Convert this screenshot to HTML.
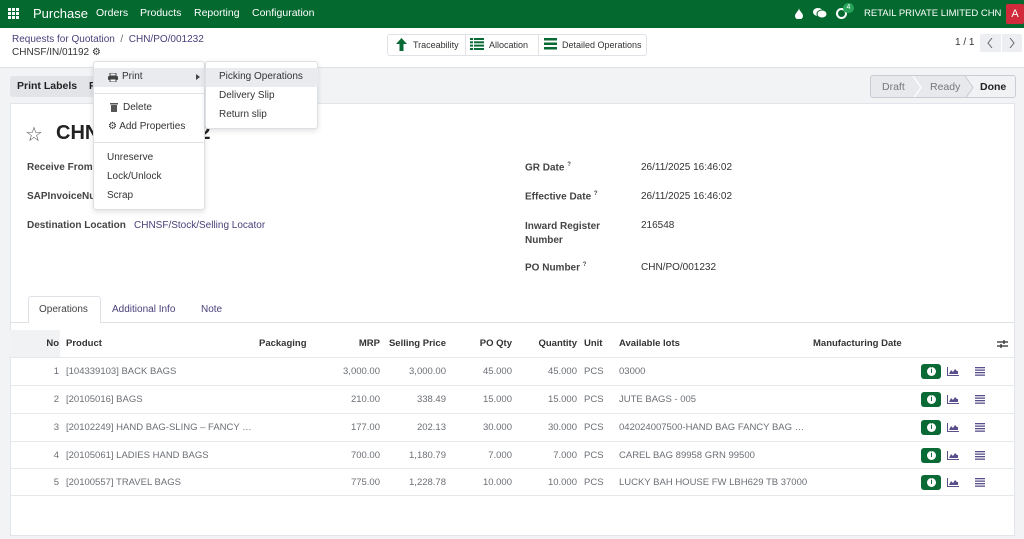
<!DOCTYPE html>
<html><head><meta charset="utf-8"><style>
*{box-sizing:border-box;margin:0;padding:0}
body{width:1024px;height:539px;overflow:hidden;font-family:"Liberation Sans",sans-serif;font-size:10px;color:#374151;background:#f1f3f5;position:relative}
.a{position:absolute;white-space:nowrap}
.nav{position:absolute;left:0;top:0;width:1024px;height:28px;background:#03692f;color:#fff}
.cp{position:absolute;left:0;top:28px;width:1024px;height:40px;background:#fff;border-bottom:1px solid #dee2e6}
.link{color:#4a3f7a}
.btn{position:absolute;background:#e2e4e8;border-radius:3px;height:21px;font-weight:bold;font-size:10.5px;line-height:21px;padding:0 7px;color:#222}
.sheet{position:absolute;left:10px;top:103px;width:1005px;height:433px;background:#fff;border:1px solid #e1e4e8}
.lbl{font-weight:bold;color:#444}
.menu{position:absolute;background:#fff;border:1px solid #dcdfe3;border-radius:3px;box-shadow:0 2px 6px rgba(0,0,0,.12)}
.mi{position:absolute;font-size:10px;color:#333}
.row{position:absolute;left:10px;width:1004px;height:28px;border-top:1px solid #e6e8eb;font-size:9.5px;color:#6b6f75}
.row span{position:absolute;top:8px}
.ib{position:absolute;left:911px;top:6px;width:20px;height:15px;background:#0a6a36;border-radius:3px;color:#0a6a36;font-weight:bold;font-size:8px;text-align:center;line-height:9px}
.ib b{position:absolute;left:6px;top:3px;width:9px;height:9px;border-radius:50%;background:#fff;font-size:7px;line-height:9px;text-align:center}
.ch{position:absolute;left:937px;top:9px}
.ls{position:absolute;left:965px;top:9px}
</style></head><body>
<div class="nav">
 <svg class="a" style="left:8px;top:8px" width="11" height="11"><g fill="#fff"><rect x="0" y="0" width="3" height="3"/><rect x="4" y="0" width="3" height="3"/><rect x="8" y="0" width="3" height="3"/><rect x="0" y="4" width="3" height="3"/><rect x="4" y="4" width="3" height="3"/><rect x="8" y="4" width="3" height="3"/><rect x="0" y="8" width="3" height="3"/><rect x="4" y="8" width="3" height="3"/><rect x="8" y="8" width="3" height="3"/></g></svg>
 <div class="a" style="left:33px;top:6px;font-size:13px">Purchase</div>
 <div class="a" style="left:96px;top:7px;font-size:10.5px">Orders</div>
 <div class="a" style="left:140px;top:7px;font-size:10.5px">Products</div>
 <div class="a" style="left:194px;top:7px;font-size:10.5px">Reporting</div>
 <div class="a" style="left:252px;top:7px;font-size:10.5px">Configuration</div>
 <svg class="a" style="left:795px;top:8px" width="8" height="11"><path d="M4 0 C4 3 0 5 0 8 A4 3.5 0 0 0 8 8 C8 5 4 3 4 0Z" fill="#fff"/></svg>
 <svg class="a" style="left:813px;top:7px" width="14" height="12"><ellipse cx="5" cy="5" rx="5" ry="4" fill="#fff"/><ellipse cx="9" cy="7" rx="5" ry="4" fill="#fff" stroke="#03692f"/></svg>
 <div class="a" style="left:836px;top:8px;width:11px;height:11px;border:2px solid #fff;border-radius:50%"></div>
 <div class="a" style="left:843px;top:3px;width:11px;height:10px;background:#27a35a;border-radius:5px;font-size:7px;text-align:center;line-height:10px">4</div>
 <div class="a" style="left:864px;top:8px;font-size:9.5px">RETAIL PRIVATE LIMITED CHN</div>
 <div class="a" style="left:1006px;top:4px;width:18px;height:20px;background:#d12a3a;border-radius:2px;text-align:center;line-height:20px;font-size:11px">A</div>
</div>
<div class="cp">
 <div class="a link" style="left:12px;top:6px;font-size:10px">Requests for Quotation &nbsp;<span style="color:#666">/</span>&nbsp; CHN/PO/001232</div>
 <div class="a" style="left:12px;top:19px;font-size:10px;color:#333">CHNSF/IN/01192 <span style="font-size:10px">⚙</span></div>
 <div class="a" style="left:387px;top:6px;width:260px;height:22px;border:1px solid #dfe2e6;border-radius:3px;background:#fff"></div>
 <div class="a" style="left:465px;top:7px;width:1px;height:20px;background:#e3e3e3"></div>
 <div class="a" style="left:538px;top:7px;width:1px;height:20px;background:#e3e3e3"></div>
 <svg class="a" style="left:396px;top:10px" width="11" height="13"><path d="M5.5 0 L11 6 H7.5 V13 H3.5 V6 H0Z" fill="#0a6a36"/></svg>
 <div class="a" style="left:413px;top:12px;font-size:9px;color:#333">Traceability</div>
 <svg class="a" style="left:470px;top:10px" width="14" height="12"><g fill="#0a6a36"><rect y="0" width="14" height="2"/><rect y="3.3" width="14" height="2"/><rect y="6.6" width="14" height="2"/><rect y="10" width="14" height="2"/><rect x="3" y="0" width="1" height="12" fill="#fff"/></g></svg>
 <div class="a" style="left:489px;top:12px;font-size:9px;color:#333">Allocation</div>
 <svg class="a" style="left:544px;top:10px" width="13" height="12"><g fill="#0a6a36"><rect y="0" width="13" height="2.5"/><rect y="4.5" width="13" height="2.5"/><rect y="9" width="13" height="2.5"/></g></svg>
 <div class="a" style="left:562px;top:12px;font-size:9px;color:#333">Detailed Operations</div>
 <div class="a" style="left:955px;top:9px;font-size:10px;color:#333">1 / 1</div>
 <div class="a" style="left:980px;top:6px;width:42px;height:18px;background:#eceef1;border-radius:2px"></div>
 <div class="a" style="left:1001px;top:6px;width:1px;height:18px;background:#fff"></div>
 <svg class="a" style="left:987px;top:10px" width="30" height="10"><polyline points="5,0 1,5 5,10" fill="none" stroke="#666"/><polyline points="23,0 27,5 23,10" fill="none" stroke="#666"/></svg>
</div>
<div class="btn" style="left:10px;top:76px">Print Labels</div>
<div class="btn" style="left:82px;top:76px;width:30px">R</div>
<div class="a" style="left:870px;top:75px;width:146px;height:23px;border:1px solid #c9ccd2;border-radius:3px;background:#e7e9ec;overflow:hidden">
 <div class="a" style="left:94px;top:0;width:52px;height:23px;background:#f1f2f4"></div>
 <svg class="a" style="left:0;top:0" width="146" height="23"><polyline points="42,0 50,11.5 42,23" fill="none" stroke="#fff" stroke-width="1.2"/><polyline points="94,0 102,11.5 94,23" fill="#e7e9ec" stroke="#c9ccd2"/></svg>
 <div class="a" style="left:11px;top:5px;font-size:10.5px;color:#777">Draft</div>
 <div class="a" style="left:59px;top:5px;font-size:10.5px;color:#777">Ready</div>
 <div class="a" style="left:109px;top:5px;font-size:10.5px;color:#222;font-weight:bold">Done</div>
</div>
<div class="sheet">
 <div class="a" style="left:14px;top:18px;font-size:20px;color:#555">☆</div>
 <div class="a" style="left:45px;top:18px;font-size:20px;font-weight:bold;color:#222">CHNSF/IN/01192</div>
 <div class="a lbl" style="left:16px;top:58px">Receive From</div>
 <div class="a lbl" style="left:16px;top:87px">SAPInvoiceNumber</div>
 <div class="a lbl" style="left:16px;top:116px">Destination Location</div>
 <div class="a link" style="left:123px;top:116px">CHNSF/Stock/Selling Locator</div>
 <div class="a lbl" style="left:514px;top:58px">GR Date <sup style="font-size:6px">?</sup></div>
 <div class="a lbl" style="left:514px;top:87px">Effective Date <sup style="font-size:6px">?</sup></div>
 <div class="a lbl" style="left:514px;top:116px;line-height:14px">Inward Register<br>Number</div>
 <div class="a lbl" style="left:514px;top:158px">PO Number <sup style="font-size:6px">?</sup></div>
 <div class="a" style="left:630px;top:58px;color:#333">26/11/2025 16:46:02</div>
 <div class="a" style="left:630px;top:87px;color:#333">26/11/2025 16:46:02</div>
 <div class="a" style="left:630px;top:116px;color:#333">216548</div>
 <div class="a" style="left:630px;top:158px;color:#333">CHN/PO/001232</div>
 <div class="a" style="left:0;top:218px;width:1003px;height:1px;background:#dee2e6"></div>
 <div class="a" style="left:17px;top:192px;width:73px;height:27px;background:#fff;border:1px solid #dee2e6;border-bottom:none;border-radius:3px 3px 0 0"></div>
 <div class="a" style="left:28px;top:200px;color:#444">Operations</div>
 <div class="a link" style="left:101px;top:200px">Additional Info</div>
 <div class="a link" style="left:190px;top:200px">Note</div>
</div>
<div class="a" style="left:10px;top:330px;width:50px;height:27px;background:#f1f2f4"></div>
<div class="a" style="left:10px;top:330px;width:1004px;height:27px;font-weight:bold;font-size:9.5px;color:#333">
 <span class="a" style="right:955px;top:8px">No</span>
 <span class="a" style="left:56px;top:8px">Product</span>
 <span class="a" style="left:249px;top:8px">Packaging</span>
 <span class="a" style="right:634px;top:8px">MRP</span>
 <span class="a" style="right:568px;top:8px">Selling Price</span>
 <span class="a" style="right:502px;top:8px">PO Qty</span>
 <span class="a" style="right:437px;top:8px">Quantity</span>
 <span class="a" style="left:574px;top:8px">Unit</span>
 <span class="a" style="left:609px;top:8px">Available lots</span>
 <span class="a" style="left:803px;top:8px">Manufacturing Date</span>
 <svg class="a" style="left:987px;top:9px" width="11" height="10"><g stroke="#333" stroke-width="1.3"><line x1="0" y1="3" x2="11" y2="3"/><line x1="0" y1="7" x2="11" y2="7"/><line x1="7" y1="1" x2="7" y2="5"/><line x1="4" y1="5" x2="4" y2="9"/></g></svg>
</div>
<div class="row" style="top:357px"><span style="right:955px">1</span><span style="left:56px">[104339103] BACK BAGS</span><span style="right:634px">3,000.00</span><span style="right:568px">3,000.00</span><span style="right:502px">45.000</span><span style="right:437px">45.000</span><span style="left:574px">PCS</span><span style="left:609px">03000</span><div class="ib"><b>i</b></div><svg class="ch" width="12" height="9"><path d="M0 0V9H12V8H1V0Z M2 7 L4 3 L6 5 L8 2 L10 4 L11 4 L11 7Z" fill="#5a4f8a"/></svg><svg class="ls" width="10" height="9"><g fill="#5a4f8a"><rect y="0" width="10" height="1.3"/><rect y="2.5" width="10" height="1.3"/><rect y="5" width="10" height="1.3"/><rect y="7.5" width="10" height="1.3"/></g></svg></div>
<div class="row" style="top:385px"><span style="right:955px">2</span><span style="left:56px">[20105016] BAGS</span><span style="right:634px">210.00</span><span style="right:568px">338.49</span><span style="right:502px">15.000</span><span style="right:437px">15.000</span><span style="left:574px">PCS</span><span style="left:609px">JUTE BAGS - 005</span><div class="ib"><b>i</b></div><svg class="ch" width="12" height="9"><path d="M0 0V9H12V8H1V0Z M2 7 L4 3 L6 5 L8 2 L10 4 L11 4 L11 7Z" fill="#5a4f8a"/></svg><svg class="ls" width="10" height="9"><g fill="#5a4f8a"><rect y="0" width="10" height="1.3"/><rect y="2.5" width="10" height="1.3"/><rect y="5" width="10" height="1.3"/><rect y="7.5" width="10" height="1.3"/></g></svg></div>
<div class="row" style="top:413px"><span style="right:955px">3</span><span style="left:56px">[20102249] HAND BAG-SLING – FANCY …</span><span style="right:634px">177.00</span><span style="right:568px">202.13</span><span style="right:502px">30.000</span><span style="right:437px">30.000</span><span style="left:574px">PCS</span><span style="left:609px">042024007500-HAND BAG FANCY BAG …</span><div class="ib"><b>i</b></div><svg class="ch" width="12" height="9"><path d="M0 0V9H12V8H1V0Z M2 7 L4 3 L6 5 L8 2 L10 4 L11 4 L11 7Z" fill="#5a4f8a"/></svg><svg class="ls" width="10" height="9"><g fill="#5a4f8a"><rect y="0" width="10" height="1.3"/><rect y="2.5" width="10" height="1.3"/><rect y="5" width="10" height="1.3"/><rect y="7.5" width="10" height="1.3"/></g></svg></div>
<div class="row" style="top:441px"><span style="right:955px">4</span><span style="left:56px">[20105061] LADIES HAND BAGS</span><span style="right:634px">700.00</span><span style="right:568px">1,180.79</span><span style="right:502px">7.000</span><span style="right:437px">7.000</span><span style="left:574px">PCS</span><span style="left:609px">CAREL BAG 89958 GRN 99500</span><div class="ib"><b>i</b></div><svg class="ch" width="12" height="9"><path d="M0 0V9H12V8H1V0Z M2 7 L4 3 L6 5 L8 2 L10 4 L11 4 L11 7Z" fill="#5a4f8a"/></svg><svg class="ls" width="10" height="9"><g fill="#5a4f8a"><rect y="0" width="10" height="1.3"/><rect y="2.5" width="10" height="1.3"/><rect y="5" width="10" height="1.3"/><rect y="7.5" width="10" height="1.3"/></g></svg></div>
<div class="row" style="top:468px;border-bottom:1px solid #e6e8eb"><span style="right:955px">5</span><span style="left:56px">[20100557] TRAVEL BAGS</span><span style="right:634px">775.00</span><span style="right:568px">1,228.78</span><span style="right:502px">10.000</span><span style="right:437px">10.000</span><span style="left:574px">PCS</span><span style="left:609px">LUCKY BAH HOUSE FW LBH629 TB 37000</span><div class="ib"><b>i</b></div><svg class="ch" width="12" height="9"><path d="M0 0V9H12V8H1V0Z M2 7 L4 3 L6 5 L8 2 L10 4 L11 4 L11 7Z" fill="#5a4f8a"/></svg><svg class="ls" width="10" height="9"><g fill="#5a4f8a"><rect y="0" width="10" height="1.3"/><rect y="2.5" width="10" height="1.3"/><rect y="5" width="10" height="1.3"/><rect y="7.5" width="10" height="1.3"/></g></svg></div>

<div class="menu" style="left:93px;top:61px;width:112px;height:149px">
 <div class="a" style="left:0;top:6px;width:111px;height:19px;background:#e9ebee"></div>
 <svg class="a" style="left:14px;top:11px" width="10" height="9"><rect x="2" y="0" width="6" height="3" fill="none" stroke="#444"/><rect x="0" y="3" width="10" height="4" rx="1" fill="#444"/><rect x="2" y="6" width="6" height="3" fill="#fff" stroke="#444"/></svg>
 <div class="mi" style="left:28px;top:9px">Print</div>
 <svg class="a" style="left:102px;top:12px" width="4" height="6"><path d="M0 0L4 3L0 6Z" fill="#444"/></svg>
 <div class="a" style="left:0;top:31px;width:111px;height:1px;background:#e3e3e3"></div>
 <svg class="a" style="left:16px;top:40px" width="8" height="10"><rect x="0" y="1" width="8" height="1.5" fill="#555"/><rect x="1" y="3" width="6" height="7" fill="#555"/></svg>
 <div class="mi" style="left:29px;top:40px">Delete</div>
 <div class="mi" style="left:14px;top:59px">⚙ Add Properties</div>
 <div class="a" style="left:0;top:80px;width:111px;height:1px;background:#e3e3e3"></div>
 <div class="mi" style="left:13px;top:90px">Unreserve</div>
 <div class="mi" style="left:13px;top:109px">Lock/Unlock</div>
 <div class="mi" style="left:13px;top:128px">Scrap</div>
</div>
<div class="menu" style="left:205px;top:61px;width:113px;height:68px">
 <div class="a" style="left:0;top:6px;width:112px;height:19px;background:#e9ebee"></div>
 <div class="mi" style="left:13px;top:9px">Picking Operations</div>
 <div class="mi" style="left:13px;top:28px">Delivery Slip</div>
 <div class="mi" style="left:13px;top:47px">Return slip</div>
</div>
</body></html>
